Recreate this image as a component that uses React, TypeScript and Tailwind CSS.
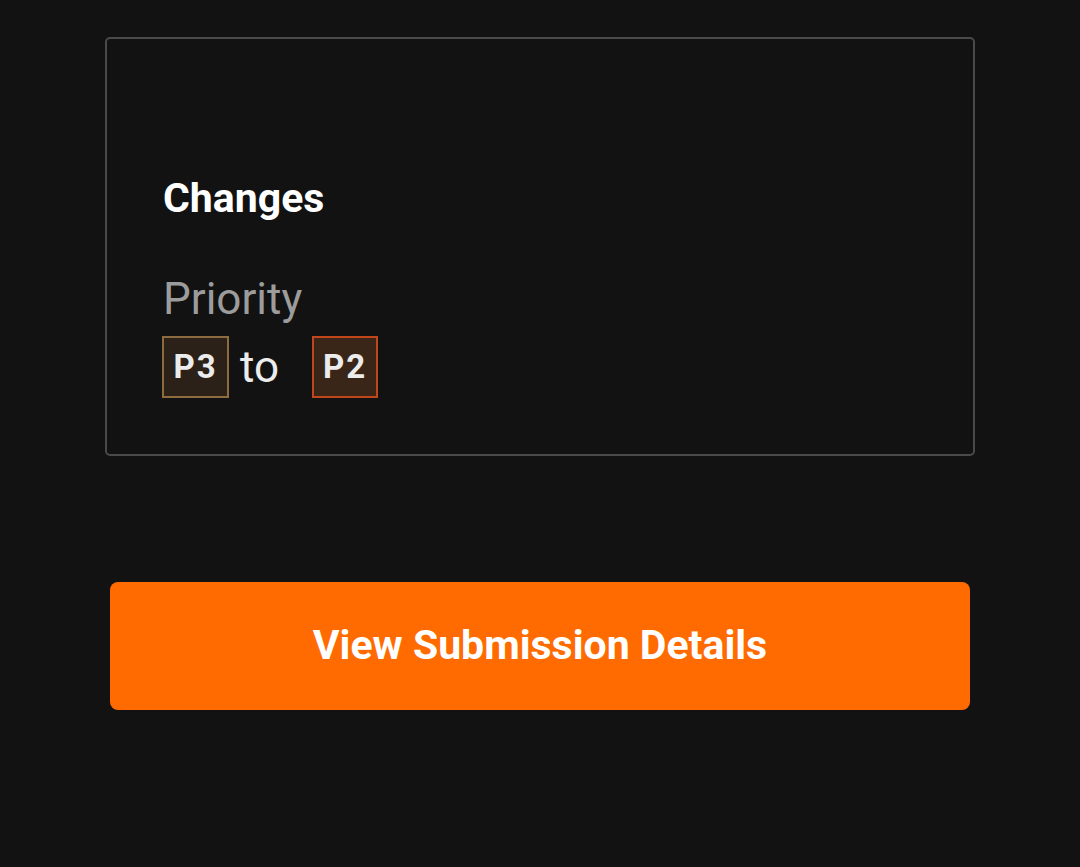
export default function App() {
  return (
    <main
      className="min-h-[867px] w-[1080px] bg-[#121212] pt-[37px]"
      style={{ fontFamily: "Roboto, 'Noto Sans', sans-serif" }}
    >
      {/* ── Changes card ── */}
      <div className="ml-[105px] h-[419px] w-[870px] rounded-[5px] border-2 border-[#4a4a4a] pl-[56px] pt-[135px]">
        <h2 className="text-[41px] font-bold leading-[48px] text-white">Changes</h2>

        <p className="mt-[53px] text-[44px] leading-[48px] text-[#9c9c9c]">Priority</p>

        <div className="-ml-px mt-[13px] flex items-center">
          <span className="flex h-[62px] w-[67px] items-center justify-center border-2 border-[#8c6b3e] bg-[#2b2118] text-[33px] font-bold tracking-[2px] text-[#ececec]">
            P3
          </span>
          <span className="ml-[11px] text-[44px] leading-[48px] text-[#ececec]">to</span>
          <span className="ml-[33px] flex h-[62px] w-[66px] items-center justify-center border-2 border-[#c2461b] bg-[#3a2619] text-[33px] font-bold tracking-[2px] text-[#ececec]">
            P2
          </span>
        </div>
      </div>

      {/* ── Action ── */}
      <button className="ml-[110px] mt-[126px] flex h-[128px] w-[860px] items-center justify-center rounded-[8px] bg-[#ff6b00]">
        <span className="text-[41px] font-bold text-white">View Submission Details</span>
      </button>
    </main>
  );
}
